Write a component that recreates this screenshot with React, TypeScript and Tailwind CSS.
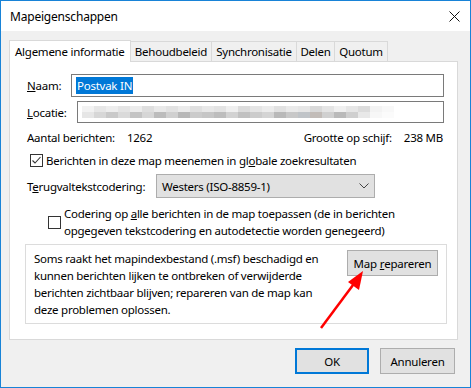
const font = "font-['Noto_Sans',_'Open_Sans',_sans-serif]";

const tabs = [
  { label: "Behoudbeleid", w: "w-[81px]" },
  { label: "Synchronisatie", w: "w-[85px]" },
  { label: "Delen", w: "w-[38px]" },
  { label: "Quotum", w: "w-[53px]" },
];

const blurTop = ["#f2f2f2", "#e6e6e6", "#ededed", "#e4e4e4", "#ececec", "#dedede", "#e9e9e9", "#e2e2e2", "#ebebeb", "#e0e0e0", "#e8e8e8", "#e3e3e3", "#efefef", "#dcdcdc", "#e5e5e5", "#ececec", "#e1e1e1", "#eaeaea", "#e6e6e6", "#d9d9d9", "#e4e4e4", "#f0f0f0", "#e6e6e6", "#dcdcdc", "#f3f3f3", "#f8f8f8"];
const blurBottom = ["#e6e6e6", "#d7d7d7", "#c9c9c9", "#dadada", "#c4c4c4", "#d6d6d6", "#bcbcbc", "#d0d0d0", "#b8b8b8", "#cbcbcb", "#c6c6c6", "#bdbdbd", "#d2d2d2", "#c1c1c1", "#cccccc", "#d4d4d4", "#b9b9b9", "#c8c8c8", "#c0c4c8", "#c2bcb8", "#d0d0d0", "#bababa", "#cfcfcf", "#e8e8e8", "#f7f7f7", "#fbfbfb"];

function Checkbox({ checked }: { checked?: boolean }) {
  return (
    <div className="flex h-[13px] w-[13px] shrink-0 items-center justify-center border border-[#333] bg-white">
      {checked && (
        <svg width="11" height="11" viewBox="0 0 11 11">
          <path d="M1.5 5.5 L4 8 L9.5 2" fill="none" stroke="#333" strokeWidth="1.1" />
        </svg>
      )}
    </div>
  );
}

export default function App() {
  return (
    <div className={`relative flex h-[388px] w-[471px] flex-col border border-[#1883d7] bg-[#f0f0f0] text-[11.5px] leading-[17px] tracking-[-0.25px] whitespace-nowrap text-black ${font}`}>
      <div className="flex h-[30px] items-center justify-between bg-white pl-[9px] pr-[10px]">
        <span className="pt-[1px] text-[12px] tracking-[-0.2px]">Mapeigenschappen</span>
        <svg width="11" height="11" viewBox="0 0 11 11">
          <path d="M0.5 0.5 L10.5 10.5 M10.5 0.5 L0.5 10.5" stroke="#111" strokeWidth="1" />
        </svg>
      </div>

      <div className="flex flex-col pl-[8px] pt-[9px]">
        <div className="relative z-10 flex h-[21px] items-end">
          <div className="-mb-[1px] flex h-[22px] w-[122px] items-center border border-b-0 border-[#d9d9d9] bg-white pl-[5px]">
            Algemene informatie
          </div>
          {tabs.map((t) => (
            <div
              key={t.label}
              className={`flex h-[20px] items-center justify-center border border-b-0 border-l-0 border-[#d9d9d9] bg-[#f0f0f0] ${t.w}`}
            >
              {t.label}
            </div>
          ))}
        </div>

        <div className="flex h-[279px] w-[449px] flex-col border border-[#d9d9d9] bg-white pl-[17px]">
          <div className="mt-[12px] flex h-[23px] items-center">
            <span className="w-[44px]"><u>N</u>aam:</span>
            <div className="flex h-[23px] w-[373px] items-center border border-[#7a7a7a] pl-[4px]">
              <span className="bg-[#0078d7] px-[1px] text-white">Postvak IN</span>
            </div>
          </div>
          <div className="mt-[4px] flex h-[22px] items-center">
            <span className="w-[50px]"><u>L</u>ocatie:</span>
            <div className="flex h-[22px] w-[367px] flex-col justify-center border border-[#7a7a7a] pl-[4px]">
              <div className="flex">
                {blurTop.map((c, i) => (
                  <div key={i} className="h-[6px] w-[12px]" style={{ backgroundColor: c }} />
                ))}
              </div>
              <div className="flex">
                {blurBottom.map((c, i) => (
                  <div key={i} className="h-[6px] w-[12px]" style={{ backgroundColor: c }} />
                ))}
              </div>
            </div>
          </div>

          <div className="mt-[6px] flex h-[17px] w-[416px] items-center justify-between">
            <span>Aantal berichten:<span className="ml-[12px]">1262</span></span>
            <span>Grootte op schijf:<span className="ml-[12px]">238 MB</span></span>
          </div>

          <div className="ml-[3px] mt-[6px] flex h-[17px] items-center gap-[3px]">
            <Checkbox checked />
            <span>Berichten in deze map meenemen in gl<u>o</u>bale zoekresultaten</span>
          </div>

          <div className="mt-[5px] flex h-[24px] items-center">
            <span className="w-[129px]">T<u>e</u>rugvaltekstcodering:</span>
            <div className="flex h-[24px] w-[219px] items-center justify-between border border-[#adadad] bg-[#e1e1e1] pl-[5px] pr-[5px]">
              <span>Westers (ISO-8859-1)</span>
              <svg width="10" height="6" viewBox="0 0 10 6">
                <path d="M0.5 0.5 L5 5 L9.5 0.5" fill="none" stroke="#444" strokeWidth="1" />
              </svg>
            </div>
          </div>

          <div className="ml-[21px] mt-[7px] flex items-center gap-[3px]">
            <Checkbox />
            <span>
              Codering op <u>a</u>lle berichten in de map toepassen (de in berichten
              <br />
              opgegeven tekstcodering en autodetectie worden genegeerd)
            </span>
          </div>

          <div className="-ml-[2px] mt-[5px] flex h-[80px] w-[422px] justify-between border border-[#dcdcdc] pl-[8px] pr-[8px] pt-[5px]">
            <span>
              Soms raakt het mapindexbestand (.msf) beschadigd en
              <br />
              kunnen berichten lijken te ontbreken of verwijderde
              <br />
              berichten zichtbaar blijven; repareren van de map kan
              <br />
              deze problemen oplossen.
            </span>
            <div className="flex h-[26px] w-[91px] items-center justify-center border border-[#adadad] bg-[#e1e1e1]">
              Map <u className="ml-[3px]">r</u>epareren
            </div>
          </div>
        </div>

        <div className="mt-[8px] flex gap-[11px] pl-[286px]">
          <div className="flex h-[26px] w-[74px] items-center justify-center border-2 border-[#0078d7] bg-[#e1e1e1]">
            OK
          </div>
          <div className="flex h-[26px] w-[75px] items-center justify-center border border-[#adadad] bg-[#e1e1e1]">
            Annuleren
          </div>
        </div>
      </div>

      <svg className="pointer-events-none absolute left-[-1px] top-[-1px]" width="471" height="388" viewBox="0 0 471 388">
        <line x1="321" y1="328" x2="356" y2="281" stroke="#ff0000" strokeWidth="2.5" />
        <polygon points="363,271 348,282 359,290" fill="#ff0000" />
      </svg>
    </div>
  );
}
